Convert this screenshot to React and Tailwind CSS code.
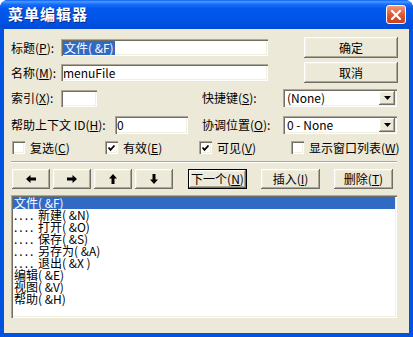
import React from "react";

const font = { fontFamily: '"Noto Sans CJK SC", "Noto Sans", sans-serif' };

const raised =
  "bg-[#ECE9D8] shadow-[inset_-1px_-1px_0_#716f64,inset_1px_1px_0_#ffffff,inset_-2px_-2px_0_#aca899,inset_2px_2px_0_#f1efe2]";
const sunken =
  "bg-white shadow-[inset_1px_1px_0_#aca899,inset_2px_2px_0_#716f64,inset_-1px_-1px_0_#ffffff,inset_-2px_-2px_0_#f1efe2]";

function Btn({ children, w = "w-[59px]", h = "h-[20px]", def = false, className = "" }) {
  return (
    <div
      className={`${w} ${h} ${className} flex items-center justify-center text-[12px] text-black ${
        def ? "border border-black" : ""
      }`}
    >
      <div className={`w-full h-full flex items-center justify-center ${raised}`}>{children}</div>
    </div>
  );
}

function Field({ w, h = "h-[17px]", children, className = "" }) {
  return (
    <div className={`${w} ${h} ${sunken} ${className} flex items-center pl-[2px] text-[12px] leading-[12px]`}>
      {children}
    </div>
  );
}

function Select({ value }) {
  return (
    <div className={`w-[114px] h-[18px] ${sunken} flex items-center pl-[4px] pr-[2px] text-[12px]`}>
      <span className="flex-1">{value}</span>
      <div className={`w-[16px] h-[14px] ${raised} flex items-center justify-center`}>
        <svg width="7" height="4" viewBox="0 0 7 4">
          <path d="M0 0H7L3.5 4Z" fill="#000" />
        </svg>
      </div>
    </div>
  );
}

function Check({ checked, label, w }) {
  return (
    <div className={`${w} flex items-center gap-[5px] text-[12px]`}>
      <div className={`w-[13px] h-[13px] ${sunken} flex items-center justify-center`}>
        {checked && (
          <svg width="9" height="8" viewBox="0 0 9 8">
            <polyline points="1.5,3.5 3.5,5.8 7.5,1.5" fill="none" stroke="#000" strokeWidth="1.8" />
          </svg>
        )}
      </div>
      <span>{label}</span>
    </div>
  );
}

const arrows = {
  left: "M0 4L4.5 0V2.5H10V5.5H4.5V8Z",
  right: "M10 4L5.5 0V2.5H0V5.5H5.5V8Z",
  up: "M4 0L8 4.5H5.5V10H2.5V4.5H0Z",
  down: "M4 10L8 5.5H5.5V0H2.5V5.5H0Z",
};

function Arrow({ dir }) {
  const horiz = dir === "left" || dir === "right";
  return (
    <Btn w="w-[38px]">
      <svg width={horiz ? 10 : 8} height={horiz ? 8 : 10} viewBox={horiz ? "0 0 10 8" : "0 0 8 10"}>
        <path d={arrows[dir]} fill="#000" />
      </svg>
    </Btn>
  );
}

const items = [
  { t: "文件( &F)", sub: false, sel: true },
  { t: "新建( &N)", sub: true },
  { t: "打开( &O)", sub: true },
  { t: "保存( &S)", sub: true },
  { t: "另存为( &A)", sub: true },
  { t: "退出( &X )", sub: true },
  { t: "编辑( &E)", sub: false },
  { t: "视图( &V)", sub: false },
  { t: "帮助( &H)", sub: false },
];

export default function App() {
  return (
    <div style={font} className="w-[413px] h-[337px] flex flex-col bg-[#0053E1] rounded-t-[8px] overflow-hidden text-black">
      {/* Title bar */}
      <div className="h-[29px] shrink-0 flex items-center justify-between pl-[8px] pr-[7px] bg-[linear-gradient(to_bottom,#0a5ef8_0%,#4b9bff_6%,#1a6ef8_14%,#0058ee_30%,#0055e6_70%,#004ad6_100%)]">
        <span className="text-white text-[15px] font-bold tracking-[1px] [text-shadow:1px_1px_0_#0b2a8a]">菜单编辑器</span>
        <div className="w-[20px] h-[19px] rounded-[3px] border border-white bg-[linear-gradient(to_bottom,#f09a7c,#df5a35_50%,#c9401d)] flex items-center justify-center">
          <svg width="10" height="10" viewBox="0 0 10 10">
            <path d="M1 1L9 9M9 1L1 9" stroke="#fff" strokeWidth="2.2" strokeLinecap="square" />
          </svg>
        </div>
      </div>

      {/* Client */}
      <div className="flex-1 mx-[4px] mb-[4px] bg-[#ECE9D8] pl-[7px] pt-[8px] flex flex-col text-[12px]">
        <div className="flex items-center h-[21px]">
          <span className="w-[50px]">标题(<u>P</u>):</span>
          <Field w="w-[207px]">
            <span className="bg-[#316AC5] text-white px-[1px] leading-[14px]">文件( &amp;F)</span>
          </Field>
          <Btn w="w-[94px]" h="h-[21px]" className="ml-[36px]">确定</Btn>
        </div>

        <div className="flex items-center h-[21px] mt-[4px]">
          <span className="w-[50px]">名称(<u>M</u>):</span>
          <Field w="w-[207px]">menuFile</Field>
          <Btn w="w-[94px]" h="h-[21px]" className="ml-[36px]">取消</Btn>
        </div>

        <div className="flex items-center h-[18px] mt-[6px]">
          <span className="w-[50px]">索引(<u>X</u>):</span>
          <Field w="w-[36px]" />
          <span className="ml-[105px] w-[81px]">快捷键(<u>S</u>):</span>
          <Select value="(None)" />
        </div>

        <div className="flex items-center h-[18px] mt-[9px]">
          <span className="w-[104px]">帮助上下文 ID(<u>H</u>):</span>
          <Field w="w-[73px]" h="h-[18px]">0</Field>
          <span className="ml-[14px] w-[81px]">协调位置(<u>O</u>):</span>
          <Select value="0 - None" />
        </div>

        <div className="flex items-center h-[13px] mt-[7px] pl-[1px]">
          <Check w="w-[93px]" label={<>复选(<u>C</u>)</>} />
          <Check w="w-[94px]" checked label={<>有效(<u>E</u>)</>} />
          <Check w="w-[92px]" checked label={<>可见(<u>V</u>)</>} />
          <Check w="w-[110px]" label={<>显示窗口列表(<u>W</u>)</>} />
        </div>

        <div className="w-[386px] h-[2px] mt-[7px] border-t border-[#aca899] border-b border-b-white" />

        <div className="flex items-center h-[20px] mt-[6px] pl-[1px]">
          <div className="flex gap-[3px]">
            <Arrow dir="left" />
            <Arrow dir="right" />
            <Arrow dir="up" />
            <Arrow dir="down" />
          </div>
          <Btn def className="ml-[15px]">下一个(<u>N</u>)</Btn>
          <Btn className="ml-[14px]">插入(<u>I</u>)</Btn>
          <Btn className="ml-[14px]">删除(<u>T</u>)</Btn>
        </div>

        <div className={`w-[386px] h-[123px] mt-[6px] ${sunken} p-[2px] flex flex-col`}>
          {items.map((it) => (
            <div
              key={it.t}
              className={`h-[12px] pl-[1px] text-[12px] leading-[12px] flex items-center whitespace-nowrap ${
                it.sel ? "bg-[#316AC5] text-white" : ""
              }`}
            >
              {it.sub && <span className="w-[24px] shrink-0 tracking-[2px]">....</span>}
              <span>{it.t}</span>
            </div>
          ))}
        </div>
      </div>
    </div>
  );
}
